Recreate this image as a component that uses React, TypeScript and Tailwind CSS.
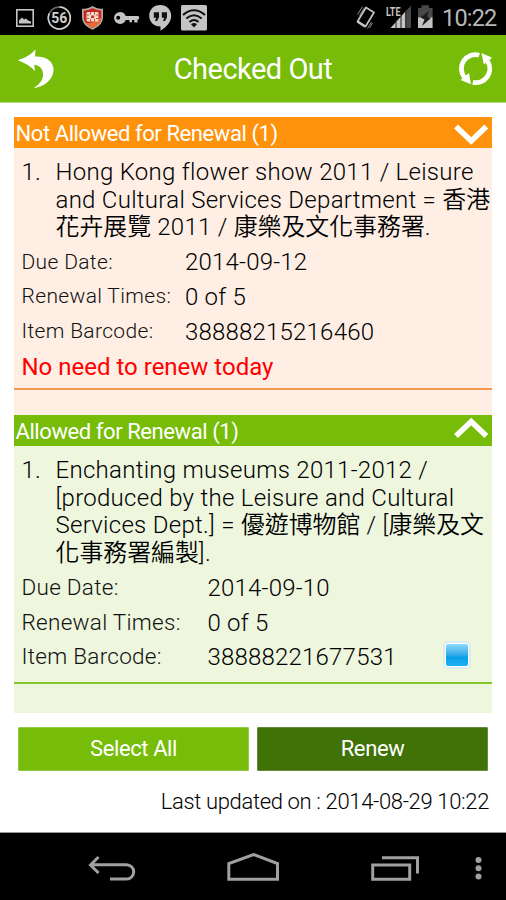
import type { ReactNode } from 'react';
import clsx from 'clsx';

function StatusBar() {
  return (
    <div className="flex h-[35px] items-center justify-between bg-black">
      <svg width="220" height="35" viewBox="0 0 220 35">
        {/* picture */}
        <rect x="16.8" y="9.8" width="16.4" height="16.4" fill="none" stroke="#c4c4c4" strokeWidth="1.6" />
        <path d="M19 23.5v-3l3-3 2 2 2-1 2 2 3 1v2z" fill="#c4c4c4" />
        {/* battery percentage */}
        <circle cx="59.3" cy="18" r="11" fill="none" stroke="#666" strokeWidth="1.4" />
        <path d="M59.3 7a11 11 0 1 1-10 6.4" fill="none" stroke="#d0d0d0" strokeWidth="1.6" />
        <text x="59.3" y="22.800" textAnchor="middle" fontSize="14" fontWeight="700" fill="#d0d0d0">56</text>
        {/* shield */}
        <path d="M92.500 6c3 2 6.500 2.800 10.500 2.800v8c0 6-4 10-10.500 13-6.500-3-10.500-7-10.500-13v-8c4 0 7.500-.8 10.500-2.800z" fill="#b9aaa5" />
        <path d="M92.500 8c3 1.700 5.500 2.300 8.800 2.400v6.600c0 5-3.300 8.300-8.800 11-5.500-2.700-8.800-6-8.800-11v-6.600c3.300-.1 5.800-.7 8.800-2.400z" fill="#c42a20" />
        <path d="M101.300 17c0 5-3.300 8.300-8.800 11-3-1.500-5.500-3.200-7-5.300 6 1 12-1 15.800-5.700z" fill="#e66a35" />
        <rect x="86.500" y="12" width="12" height="9.500" rx="1.500" fill="#f1ddcf" />
        <path d="M90.500 12v2.600M94.500 12v2.600M90.500 18.800v2.700M94.500 18.800v2.700M86.500 15h2.600M96 15h2.600M86.500 18.500h2.600M96 18.500h2.600" stroke="#cf3826" strokeWidth=".9" />
        <rect x="91" y="15.500" width="3.200" height="2.600" fill="#cf3826" />
        {/* key */}
        <path d="M120 12a6 6 0 0 1 5.700 4H138q1.200 0 1.200 1.700t-1.200 1.800h-.5v3h-3.200v-2.500H132v2.300h-2.600v-2.300h-3.700A6 6 0 1 1 120 12zm-1.800 3.800a2 2 0 1 0 0 4 2 2 0 0 0 0-4z" fill="#c4c4c4" fillRule="evenodd" />
        {/* hangouts */}
        <path d="M160.200 5c6.400 0 11 4.700 11 10.700 0 6.300-4.800 11.300-10.700 15v-4.300c-6.600 0-11.300-4.600-11.300-10.700S153.800 5 160.200 5z" fill="#c4c4c4" />
        <path d="M153.800 12.300h5.200v5l-2 3.700h-2l1.200-3.200h-2.400zM161.800 12.300h5.200v5l-2 3.700h-2l1.200-3.200h-2.400z" fill="#111" />
        {/* wifi */}
        <rect x="181" y="5" width="26" height="25.500" rx="1.500" fill="#c4c4c4" />
        <path d="M183 15q11-9.500 22 0M186.300 18.500q7.700-6.500 15.400 0M189.500 22q4.500-4 9 0" fill="none" stroke="#111" strokeWidth="2.100" />
        <path d="M191 24.300q3-2.400 6 0l-3 3.200z" fill="#111" />
      </svg>
      <div className="flex items-center">
        <svg width="88" height="35" viewBox="354 0 88 35">
          {/* vibrating phone */}
          <path d="M366 7.500l8 5-8.500 14-8-5z" fill="none" stroke="#c4c4c4" strokeWidth="1.700" strokeLinejoin="round" />
          <path d="M357.500 21.500l7.500 5" stroke="#c4c4c4" strokeWidth="2.500" />
          <path d="M357.500 14.500l5-8M359.500 15.500l5-8M367.500 28.500l4-6.500M369.500 28l3-5" stroke="#999" strokeWidth=".9" />
          {/* LTE signal */}
          <path d="M411 5.500v22.500h-20z" fill="#484848" />
          <path d="M405.500 11.500V28h-15z" fill="#c4c4c4" />
          <path d="M396 20v8M401 15v13M405.800 9v19" stroke="#222" strokeWidth="1" />
          <path d="M384 4h17.500v8.500l-4 4H384z" fill="#000" />
          <text x="386" y="15.700" fontSize="12.500" fontWeight="700" textLength="14.500" lengthAdjust="spacingAndGlyphs" fill="#c4c4c4">LTE</text>
          {/* charging battery */}
          <path d="M418 8h3.500V5.300h7.500V8h3.600v9.500H418z" fill="#484848" />
          <path d="M418 17.300h14.600V28H418z" fill="#c4c4c4" />
          <path d="M429 11l-8.500 6.500 4 2-2.500 6.500 9-8-4-1.500z" fill="#1c1c1c" />
        </svg>
        <span className="relative top-px w-[64px] text-[23.500px] leading-none tracking-[-0.800px] text-[#b8b8b8]">10:22</span>
      </div>
    </div>
  );
}

function Header() {
  return (
    <div className="grid h-[68px] grid-cols-[60px_1fr_60px] items-center border-b border-[#b5dc80] bg-[#76bc08]">
      <svg width="60" height="67" viewBox="0 35 60 67">
        <path d="M17.800 60.200Q29 57 35.500 49.500L35 56.500C47 56 54 62 53.500 70.500C53 79.500 45 86.500 33.500 88.200C40 84 43.500 79.500 43 73.500C42.600 68.500 39.500 65.500 34.300 64.800L35 71Q28.500 64 17.800 60.200z" fill="#fff" />
      </svg>
      <h1 className="pt-[3px] text-center text-[29px] tracking-[-0.500px] text-white">Checked Out</h1>
      <svg width="60" height="67" viewBox="446 35 60 67">
        <path d="M479.200 55.200A13.900 13.900 0 0 0 464.400 77.200M487.600 61.300A13.900 13.900 0 0 1 472.800 82.300" fill="none" stroke="#fff" strokeWidth="4.800" />
        <path d="M481.500 53l10.700 4.800-8.400 6.700zM471 84.200l-10.500-4.200 8.500-7z" fill="#fff" />
      </svg>
    </div>
  );
}

function SectionHeader({ title, open, className }: { title: string; open: boolean; className: string }) {
  return (
    <div className={clsx('flex h-[31px] items-center justify-between pr-[4px] pl-[1.500px] text-white', className)}>
      <h2 className="pt-[2px] text-[22px] tracking-[-0.420px]">{title}</h2>
      <svg width="34" height="31" viewBox="0 0 34 31" fill="none" stroke="#fff" strokeWidth="5.500">
        <path d={open ? 'M2 21L17.200 6.500L32.300 21' : 'M2 9.500L17.200 24L32.300 9.500'} />
      </svg>
    </div>
  );
}

// Han runs are set a touch tighter than the Latin text around them
function MixedLine({ text }: { text: string }) {
  return (
    <p className="whitespace-nowrap">
      {text.split(/([\u4e00-\u9fff]+)/).map((part, i) =>
        i % 2 ? <span key={i} className="text-[23.900px] leading-none tracking-normal">{part}</span> : part
      )}
    </p>
  );
}

function Title({ lines }: { lines: string[] }) {
  return (
    <div className="flex text-[24px] leading-[27.7px] font-[350] tracking-[0.280px] text-black">
      <span className="w-[34px] shrink-0">1.</span>
      <div>
        {lines.map((line) => (
          <MixedLine key={line} text={line} />
        ))}
      </div>
    </div>
  );
}

function Field({ label, labelClass, children }: { label: string; labelClass: string; children: ReactNode }) {
  return (
    <div className="flex h-[34.600px] items-center font-[350] whitespace-nowrap">
      <span className={clsx('shrink-0 text-[#111]', labelClass)}>{label}</span>
      <span className="text-[24px] tracking-[0.200px] text-black">{children}</span>
    </div>
  );
}

const NARROW = 'w-[163.500px] text-[21px] tracking-[0.340px]';
const WIDE = 'w-[186px] text-[22.500px] tracking-[0.280px]';

export default function App() {
  return (
    <div className="flex h-[900px] w-[506px] flex-col overflow-hidden bg-white font-['Roboto','Noto_Sans_CJK_TC',sans-serif]">
      <StatusBar />
      <Header />

      <main className="flex flex-1 flex-col px-[14px] pt-[14px]">
        <SectionHeader title="Not Allowed for Renewal (1)" open={false} className="bg-[#ff920d]" />
        <section className="h-[267px] bg-[#feeee4]">
          <div className="h-[242px] border-b-2 border-[#f6994e] pt-[11px] pl-[7.500px]">
            <Title
              lines={[
                'Hong Kong flower show 2011 / Leisure',
                'and Cultural Services Department = 香港',
                '花卉展覽 2011 / 康樂及文化事務署.',
              ]}
            />
            <div className="pt-[3px]">
              <Field label="Due Date:" labelClass={NARROW}>2014-09-12</Field>
              <Field label="Renewal Times:" labelClass={NARROW}>0 of 5</Field>
              <Field label="Item Barcode:" labelClass={NARROW}>38888215216460</Field>
            </div>
            <p className="text-[24px] leading-[36px] text-[#ff0000]">No need to renew today</p>
          </div>
        </section>

        <SectionHeader title="Allowed for Renewal (1)" open className="bg-[#76bc08]" />
        <section className="h-[267px] bg-[#eef6de]">
          <div className="relative h-[238px] border-b-2 border-[#84c62c] pt-[11px] pl-[7.500px]">
            <Title
              lines={[
                'Enchanting museums 2011-2012 /',
                '[produced by the Leisure and Cultural',
                'Services Dept.] = 優遊博物館 / [康樂及文',
                '化事務署編製].',
              ]}
            />
            <div className="pt-[3px]">
              <Field label="Due Date:" labelClass={WIDE}>2014-09-10</Field>
              <Field label="Renewal Times:" labelClass={WIDE}>0 of 5</Field>
              <Field label="Item Barcode:" labelClass={WIDE}>38888221677531</Field>
            </div>
            <span className="absolute top-[195px] right-[21px] size-[28px] rounded-[5px] border-2 border-[#d9eef0] bg-white p-px">
              <span className="block size-full rounded-[2px] bg-linear-to-b from-[#8ad8fa] via-[#05a0e6] via-60% to-[#1eb0f0]" />
            </span>
          </div>
        </section>

        <div className="flex gap-[8px] px-[4px] pt-[14px] text-[22px] tracking-[-0.400px] text-white">
          <button className="h-[44px] flex-1 rounded-[1px] border border-[#91c94b] bg-[#76bc08] pb-[2px]">Select All</button>
          <button className="h-[44px] flex-1 rounded-[1px] border border-[#648c3f] bg-[#407208] pb-[2px]">Renew</button>
        </div>
        <p className="pt-[14px] pr-[3px] text-right text-[22px] font-[350] tracking-[-0.350px] whitespace-nowrap text-black">
          Last updated on : 2014-08-29 10:22
        </p>
      </main>

      <nav className="h-[68px] shrink-0 border-t border-[#999] bg-black">
        <svg width="506" height="67" viewBox="0 833 506 67" fill="none" stroke="#a0a0a0" strokeWidth="3">
          <path d="M98.500 857l-8 8 8 8M91 864.700h35.500a7.200 7.200 0 0 1 0 14.400H110" />
          <path d="M228.800 879.200v-15.700l24.700-9 24 9v15.700z" />
          <path d="M372.700 865h37v14.200h-37zM382 857.700h35.500V873.500" />
          <g fill="#a0a0a0" stroke="none">
            <circle cx="478.500" cy="860" r="3" />
            <circle cx="478.500" cy="868.300" r="3" />
            <circle cx="478.500" cy="876.600" r="3" />
          </g>
        </svg>
      </nav>
    </div>
  );
}
